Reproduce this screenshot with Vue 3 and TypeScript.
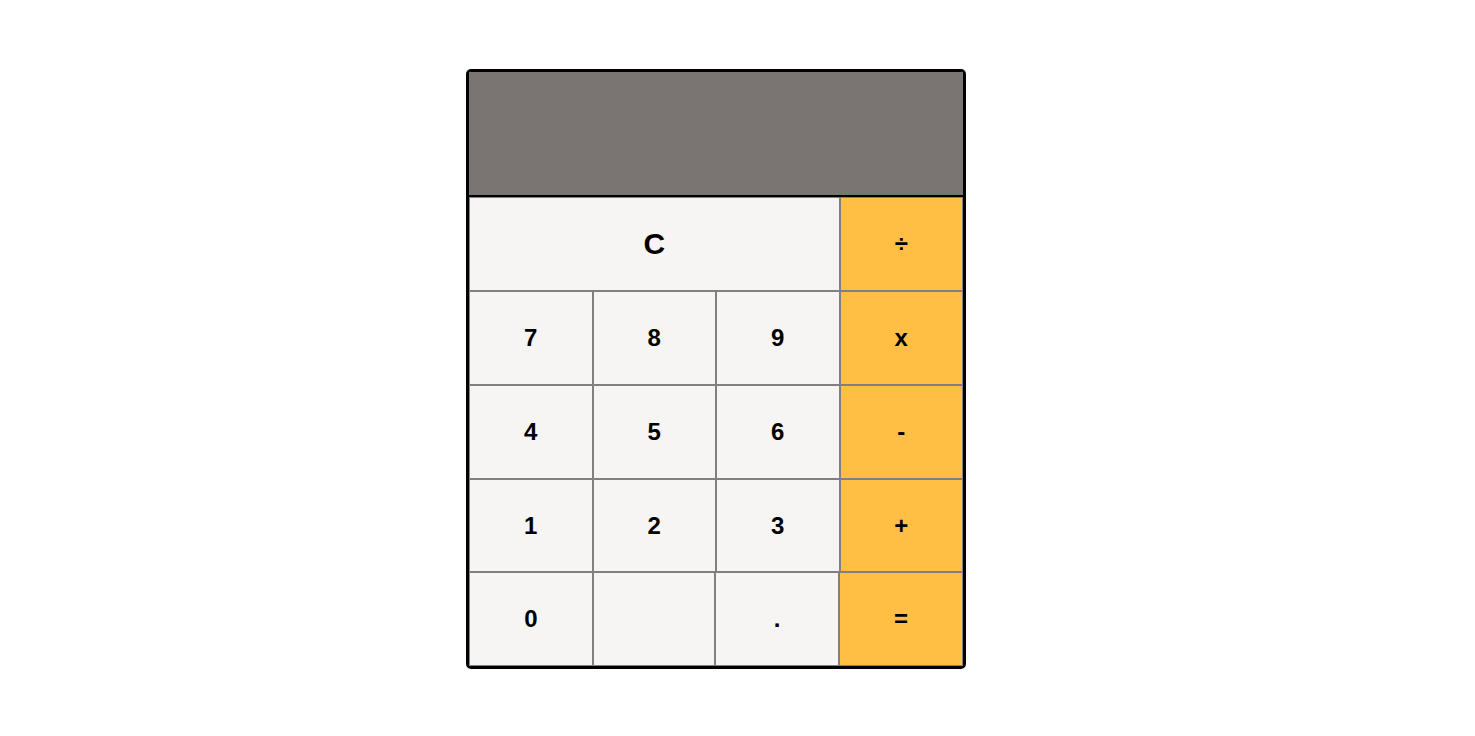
<script setup lang="ts">
import { ref } from 'vue'

type Kind = 'digit' | 'operator' | 'clear' | 'blank'
interface Key {
  label: string
  kind: Kind
}

const digit = (label: string): Key => ({ label, kind: 'digit' })
const operator = (label: string): Key => ({ label, kind: 'operator' })

const rows: Key[][] = [
  [{ label: 'C', kind: 'clear' }, operator('÷')],
  [digit('7'), digit('8'), digit('9'), operator('x')],
  [digit('4'), digit('5'), digit('6'), operator('-')],
  [digit('1'), digit('2'), digit('3'), operator('+')],
  [digit('0'), { label: '', kind: 'blank' }, digit('.'), operator('=')],
]

const display = ref('')
const pending = ref('')
const stored = ref(0)

function compute(a: number, b: number, op: string): number {
  if (op === '÷') return a / b
  if (op === 'x') return a * b
  if (op === '-') return a - b
  if (op === '+') return a + b
  return b
}

function press(key: Key): void {
  if (key.kind === 'clear') {
    display.value = ''
    pending.value = ''
    stored.value = 0
  } else if (key.kind === 'digit') {
    if (key.label === '.' && display.value.includes('.')) return
    display.value += key.label
  } else if (key.kind === 'operator') {
    const result = compute(stored.value, Number(display.value), pending.value)
    if (key.label === '=') {
      display.value = String(result)
      pending.value = ''
    } else {
      stored.value = result
      pending.value = key.label
      display.value = ''
    }
  }
}
</script>

<template>
  <main class="page">
    <section class="calculator">
      <output class="screen">{{ display }}</output>
      <div class="keys">
        <div v-for="(row, i) in rows" :key="i" class="row">
          <template v-for="(key, j) in row" :key="j">
            <div v-if="key.kind === 'blank'" class="key blank"></div>
            <button v-else type="button" class="key" :class="key.kind" @click="press(key)">
              {{ key.label }}
            </button>
          </template>
        </div>
      </div>
    </section>
  </main>
</template>

<style>
body {
  margin: 0;
  background: #fff;
}
</style>

<style scoped>
.page {
  box-sizing: border-box;
  min-height: 100vh;
  padding: 2px 43px 0 0;
  display: flex;
  align-items: center;
  justify-content: center;
  font-family: Arial, "Liberation Sans", sans-serif;
}
.calculator {
  box-sizing: border-box;
  width: 100%;
  max-width: 500px;
  border: 3px solid #000;
  border-radius: 5px;
  background: #000;
}
.screen {
  box-sizing: border-box;
  height: 125px;
  padding: 0 20px;
  display: flex;
  align-items: center;
  justify-content: flex-end;
  overflow: hidden;
  border-bottom: 2px solid #000;
  background: #7a7573;
  color: #fff;
  font-size: 48px;
}
.keys {
  height: 469px;
  display: grid;
  grid-template-rows: 94fr 94fr 94fr 93fr 94fr;
}
.row {
  display: grid;
  grid-template-columns: repeat(4, 1fr);
}
.row:last-child {
  grid-template-columns: 124fr 122fr 124fr 124fr;
}
.key {
  box-sizing: border-box;
  min-width: 0;
  margin: 0;
  padding: 0;
  border: 1px solid #808080;
  border-radius: 0;
  background: #f6f5f4;
  color: #000;
  font-family: inherit;
  font-size: 24px;
  font-weight: bold;
}
button.key {
  cursor: pointer;
}
.clear {
  grid-column: span 3;
  font-size: 30px;
}
.operator {
  background: #ffbf45;
}
</style>
